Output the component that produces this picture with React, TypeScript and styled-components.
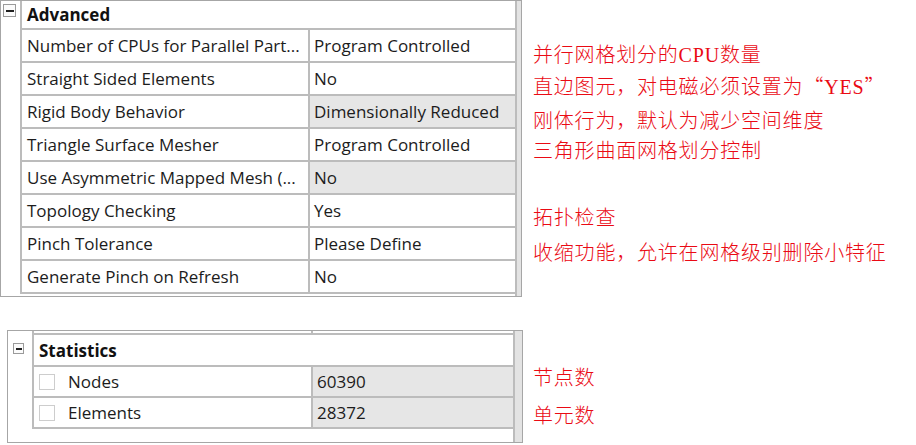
import React from "react";
import styled, { createGlobalStyle } from "styled-components";

const GlobalStyle = createGlobalStyle`
  html, body { margin: 0; padding: 0; background: #ffffff; }
  body { font-family: "Open Sans", "Noto Sans", sans-serif; color: #1c1c1c; }
`;

const LINE = "#bcbcbc";

const Page = styled.div`
  display: flex;
  flex-direction: column;
  width: 916px;
  height: 445px;
  overflow: hidden;
`;

const Section = styled.div<{ $top: number; $indent: number; $gap: number }>`
  display: flex;
  align-items: flex-start;
  margin-top: ${(p) => p.$top}px;
  padding-left: ${(p) => p.$indent}px;
  gap: ${(p) => p.$gap}px;
`;

const Panel = styled.div<{ $width: number; $height: number }>`
  display: flex;
  box-sizing: border-box;
  width: ${(p) => p.$width}px;
  height: ${(p) => p.$height}px;
  border: 1px solid #a6a6a6;
  background: #ffffff;
`;

const TreeArea = styled.div`
  flex: 1;
  display: flex;
  flex-direction: column;
  min-width: 0;
`;

const Tree = styled.div`
  display: flex;
`;

const Gutter = styled.div<{ $width: number; $padTop: number; $padLeft: number }>`
  width: ${(p) => p.$width}px;
  flex: none;
  box-sizing: border-box;
  padding-top: ${(p) => p.$padTop}px;
  padding-left: ${(p) => p.$padLeft}px;
  border-right: 2px solid ${LINE};
`;

const Collapse = styled.div<{ $size: number }>`
  box-sizing: border-box;
  width: ${(p) => p.$size}px;
  height: ${(p) => p.$size}px;
  border: 1px solid #9a9a9a;
  background: #fbfbfb;
  display: flex;
  align-items: center;
  justify-content: center;
  &::after {
    content: "";
    width: ${(p) => p.$size - 5}px;
    height: 2px;
    background: #202020;
  }
`;

const Body = styled.div`
  flex: 1;
  min-width: 0;
  display: flex;
  flex-direction: column;
`;

const HeaderRow = styled.div<{ $height: number }>`
  height: ${(p) => p.$height}px;
  border-bottom: 2px solid ${LINE};
  display: flex;
  align-items: center;
  padding-left: 5px;
  font-weight: 700;
  font-size: 17px;
  color: #111;
`;

const Row = styled.div<{ $height: number; $nameWidth: number }>`
  display: grid;
  grid-template-columns: ${(p) => p.$nameWidth}px 1fr;
  height: ${(p) => p.$height}px;
  border-bottom: 2px solid ${LINE};
`;

const NameCell = styled.div`
  display: flex;
  align-items: center;
  gap: 13px;
  padding-left: 5px;
  border-right: 2px solid ${LINE};
  font-size: 17px;
  white-space: nowrap;
  overflow: hidden;
`;

const ValueCell = styled.div<{ $shaded?: boolean }>`
  display: flex;
  align-items: center;
  padding-left: 4px;
  font-size: 17px;
  white-space: nowrap;
  overflow: hidden;
  background: ${(p) => (p.$shaded ? "#e6e6e6" : "#ffffff")};
`;

const Check = styled.span`
  box-sizing: border-box;
  width: 16px;
  height: 16px;
  border: 1px solid #cdcdcd;
  background: #ffffff;
  flex: none;
`;

const Strip = styled.div<{ $width: number }>`
  width: ${(p) => p.$width}px;
  flex: none;
  box-sizing: border-box;
  border-left: 2px solid ${LINE};
  background: #e3e3e3;
`;

const Notes = styled.div`
  display: flex;
  flex-direction: column;
`;

const Note = styled.div<{ $top: number }>`
  margin-top: ${(p) => p.$top}px;
  height: 20px;
  line-height: 20px;
  font-family: "Liberation Serif", "Noto Sans CJK SC", serif;
  font-weight: 300;
  font-size: 20px;
  letter-spacing: 0.8px;
  color: #ea0a14;
  white-space: nowrap;
`;

const Quote = styled.span`
  font-family: "Noto Sans CJK SC", sans-serif;
  font-feature-settings: "fwid";
`;

type Prop = { name: string; value: string; shaded?: boolean };

const advanced: Prop[] = [
  { name: "Number of CPUs for Parallel Part...", value: "Program Controlled" },
  { name: "Straight Sided Elements", value: "No" },
  { name: "Rigid Body Behavior", value: "Dimensionally Reduced", shaded: true },
  { name: "Triangle Surface Mesher", value: "Program Controlled" },
  { name: "Use Asymmetric Mapped Mesh (...", value: "No", shaded: true },
  { name: "Topology Checking", value: "Yes" },
  { name: "Pinch Tolerance", value: "Please Define" },
  { name: "Generate Pinch on Refresh", value: "No" },
];

const stats: Prop[] = [
  { name: "Nodes", value: "60390", shaded: true },
  { name: "Elements", value: "28372", shaded: true },
];

export default function App() {
  return (
    <Page>
      <GlobalStyle />
      <Section $top={0} $indent={0} $gap={11}>
        <Panel $width={522} $height={297}>
          <TreeArea>
            <Tree>
              <Gutter $width={21} $padTop={3} $padLeft={2}>
                <Collapse $size={13} />
              </Gutter>
              <Body>
                <HeaderRow $height={27}>Advanced</HeaderRow>
                {advanced.map((p) => (
                  <Row key={p.name} $height={31} $nameWidth={288}>
                    <NameCell>{p.name}</NameCell>
                    <ValueCell $shaded={p.shaded}>{p.value}</ValueCell>
                  </Row>
                ))}
              </Body>
            </Tree>
          </TreeArea>
          <Strip $width={6} />
        </Panel>
        <Notes>
          <Note $top={45}>并行网格划分的CPU数量</Note>
          <Note $top={11}>
            直边图元，对电磁必须设置为<Quote>“</Quote>YES<Quote>”</Quote>
          </Note>
          <Note $top={15}>刚体行为，默认为减少空间维度</Note>
          <Note $top={10}>三角形曲面网格划分控制</Note>
          <Note $top={47}>拓扑检查</Note>
          <Note $top={15}>收缩功能，允许在网格级别删除小特征</Note>
        </Notes>
      </Section>
      <Section $top={33} $indent={7} $gap={10}>
        <Panel $width={516} $height={113}>
          <TreeArea>
            <Tree>
              <Gutter $width={26} $padTop={12} $padLeft={5}>
                <Collapse $size={11} />
              </Gutter>
              <Body>
                <Row $height={2} $nameWidth={279}>
                  <NameCell />
                  <ValueCell />
                </Row>
                <HeaderRow $height={30}>Statistics</HeaderRow>
                {stats.map((p) => (
                  <Row key={p.name} $height={29} $nameWidth={279}>
                    <NameCell>
                      <Check />
                      {p.name}
                    </NameCell>
                    <ValueCell $shaded={p.shaded}>{p.value}</ValueCell>
                  </Row>
                ))}
              </Body>
            </Tree>
          </TreeArea>
          <Strip $width={9} />
        </Panel>
        <Notes>
          <Note $top={38}>节点数</Note>
          <Note $top={18}>单元数</Note>
        </Notes>
      </Section>
    </Page>
  );
}
